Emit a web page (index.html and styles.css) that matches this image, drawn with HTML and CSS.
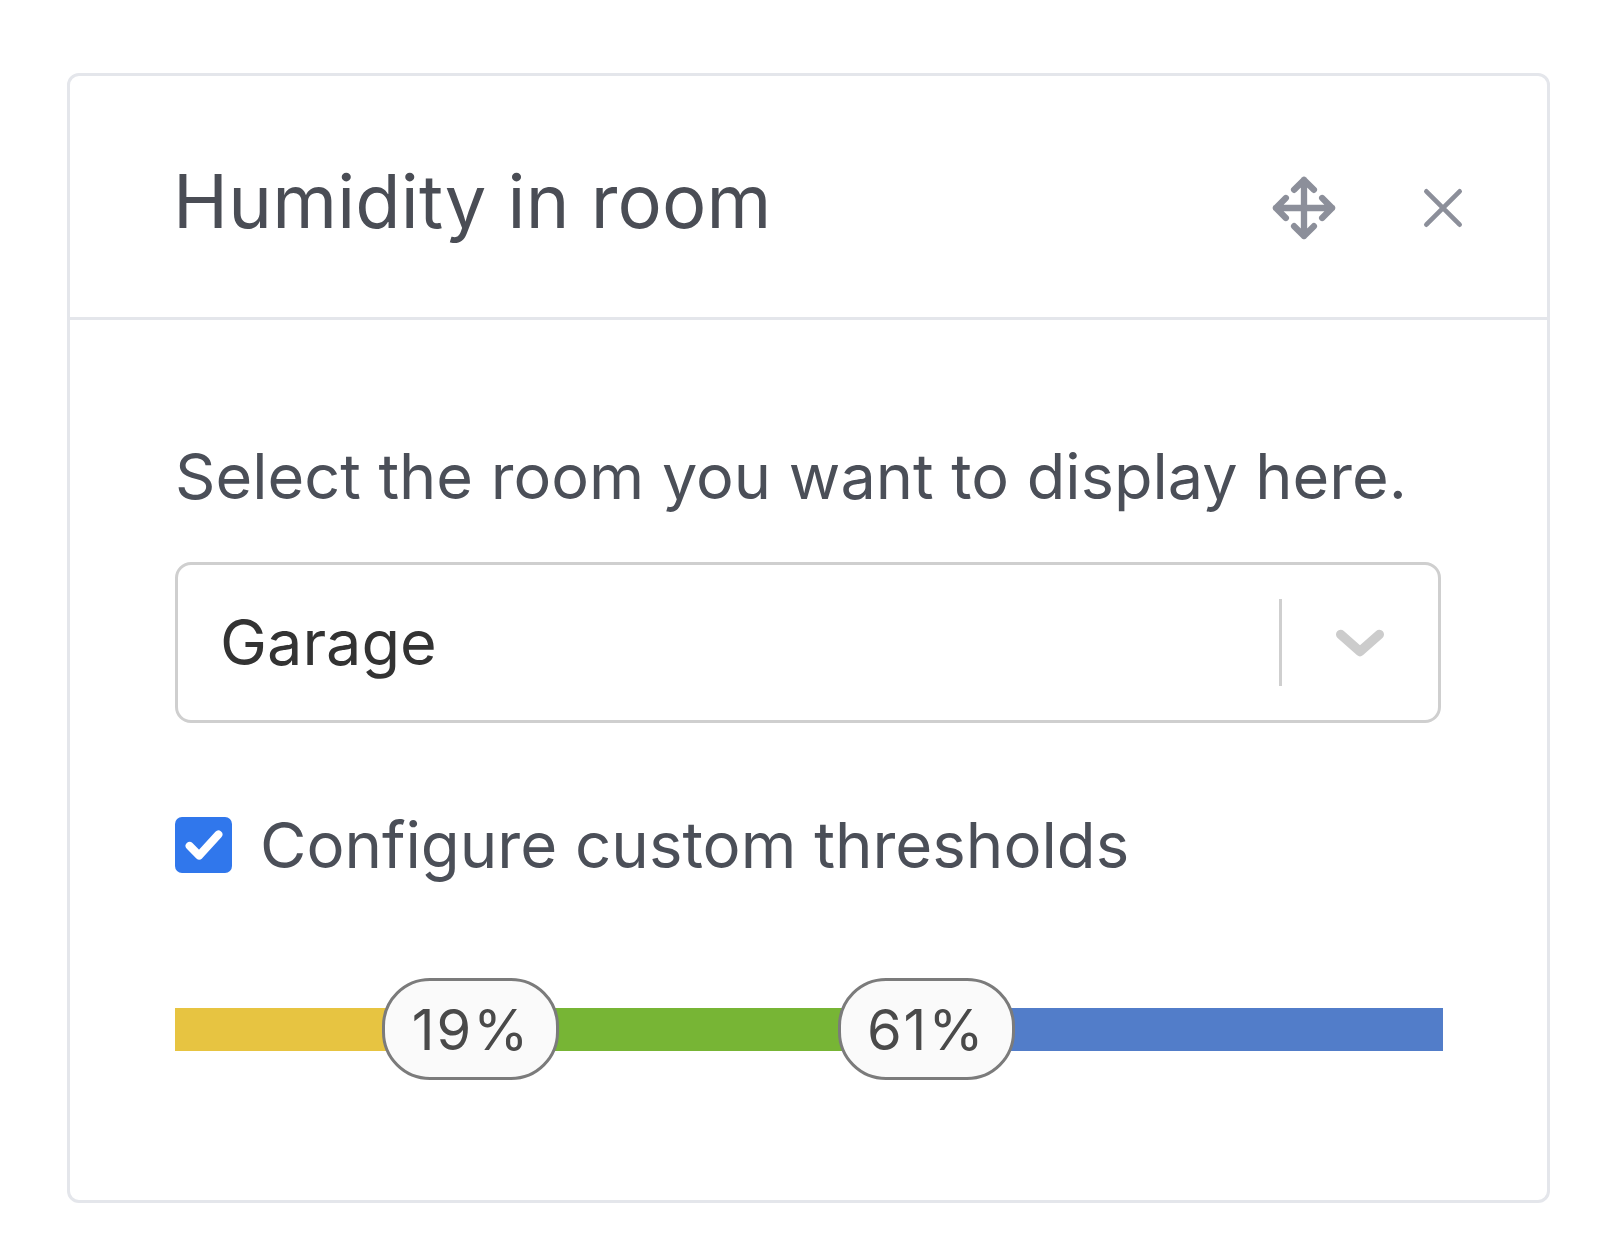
FILE: index.html
```html
<!DOCTYPE html>
<html lang="en">
<head>
<meta charset="utf-8">
<title>Humidity in room</title>
<link rel="stylesheet" href="styles.css">
</head>
<body>
<div class="card">
  <div class="card-header">
    <h1 class="title">Humidity in room</h1>
    <div class="actions">
      <svg class="icon-move" viewBox="0 0 24 24" aria-hidden="true">
        <path d="M12 1.8v20.4M1.8 12h20.4M8.4 5.4l3.6-3.6 3.6 3.6M8.4 18.6l3.6 3.6 3.6-3.6M5.4 8.4L1.8 12l3.6 3.6M18.6 8.4l3.6 3.6-3.6 3.6"/>
      </svg>
      <svg class="icon-close" viewBox="0 0 24 24" aria-hidden="true">
        <path d="M2 2l20 20M22 2L2 22"/>
      </svg>
    </div>
  </div>
  <div class="card-body">
    <p class="desc">Select the room you want to display here.</p>
    <div class="select">
      <span class="select-value">Garage</span>
      <div class="select-indicators">
        <span class="select-sep"></span>
        <svg class="chevron" viewBox="0 0 24 14" aria-hidden="true">
          <path d="M3 3l9 8 9-8"/>
        </svg>
      </div>
    </div>
    <label class="check-row">
      <span class="checkbox">
        <svg viewBox="0 0 24 24" aria-hidden="true"><path d="M4.5 12.5l5 5L19.5 6.5"/></svg>
      </span>
      <span class="check-label">Configure custom thresholds</span>
    </label>
    <div class="slider">
      <div class="track">
        <span class="seg seg-yellow" style="width:23.3%"></span>
        <span class="seg seg-green" style="width:35.9%"></span>
        <span class="seg seg-blue"></span>
      </div>
      <span class="thumb" style="left:23.3%">19%</span>
      <span class="thumb" style="left:59.2%">61%</span>
    </div>
  </div>
</div>
</body>
</html>
```
FILE: styles.css
```css
* { box-sizing: border-box; }
html, body { margin: 0; padding: 0; background: #ffffff; }
body {
  padding: 73px 0 0 67px;
  font-family: "Inter", "Liberation Sans", Arial, sans-serif;
  color: #4b4e56;
}
.card {
  width: 1483px;
  height: 1130px;
  border: 3px solid #e4e6eb;
  border-radius: 12px;
  background: #fff;
}
.card-header {
  height: 244px;
  border-bottom: 3px solid #e4e6eb;
  display: flex;
  align-items: center;
  justify-content: space-between;
  padding: 8px 84px 0 103px;
}
.title {
  margin: 0;
  font-weight: 400;
  font-size: 74px;
  line-height: 1;
  color: #4a4d55;
  letter-spacing: 0.2px;
}
.actions {
  display: flex;
  align-items: center;
  gap: 86px;
  padding-top: 14px;
}
.icon-move {
  width: 66px;
  height: 66px;
  fill: none;
  stroke: #8c8f9a;
  stroke-width: 2.3;
  stroke-linecap: round;
  stroke-linejoin: round;
}
.icon-close {
  width: 40px;
  height: 40px;
  fill: none;
  stroke: #8c8f9a;
  stroke-width: 2.8;
  stroke-linecap: round;
}
.card-body {
  padding: 116px 106px 0 105px;
}
.desc {
  margin: 0;
  font-size: 63px;
  line-height: 80px;
  color: #4b4f58;
}
.select {
  margin-top: 46px;
  height: 161px;
  border: 3px solid #cfcfcf;
  border-radius: 16px;
  display: flex;
  align-items: center;
  justify-content: space-between;
  padding: 0 52px 0 42px;
}
.select-value {
  font-size: 63px;
  color: #333333;
  line-height: 1;
}
.select-indicators {
  display: flex;
  align-items: center;
  gap: 52px;
}
.select-sep {
  width: 3px;
  height: 87px;
  background: #cfcfcf;
}
.chevron {
  width: 52px;
  height: 30px;
  fill: none;
  stroke: #cccccc;
  stroke-width: 4.4;
  stroke-linecap: round;
  stroke-linejoin: round;
}
.check-row {
  margin-top: 94px;
  height: 56px;
  display: flex;
  align-items: center;
  gap: 28px;
}
.checkbox {
  width: 57px;
  height: 56px;
  border-radius: 7px;
  background: #3077ec;
  display: flex;
  align-items: center;
  justify-content: center;
}
.checkbox svg {
  width: 46px;
  height: 46px;
  fill: none;
  stroke: #ffffff;
  stroke-width: 4.2;
  stroke-linecap: round;
  stroke-linejoin: round;
}
.check-label {
  font-size: 63.5px;
  line-height: 1;
  color: #4b4f58;
}
.slider {
  position: relative;
  margin-top: 105px;
  height: 102px;
  width: 1268px;
  display: flex;
  align-items: center;
}
.track {
  width: 100%;
  height: 43px;
  display: flex;
}
.seg { display: block; height: 100%; }
.seg-yellow { background: #e7c441; }
.seg-green { background: #77b535; }
.seg-blue { background: #527dc9; flex: 1; }
.thumb {
  position: absolute;
  top: 0;
  width: 177px;
  height: 102px;
  margin-left: -88px;
  border: 3px solid #7b7b7b;
  border-radius: 48px;
  background: #fafafa;
  display: flex;
  align-items: center;
  justify-content: center;
  font-size: 56px;
  letter-spacing: 2px;
  color: #4a4a4a;
  padding-top: 2px;
}
```
